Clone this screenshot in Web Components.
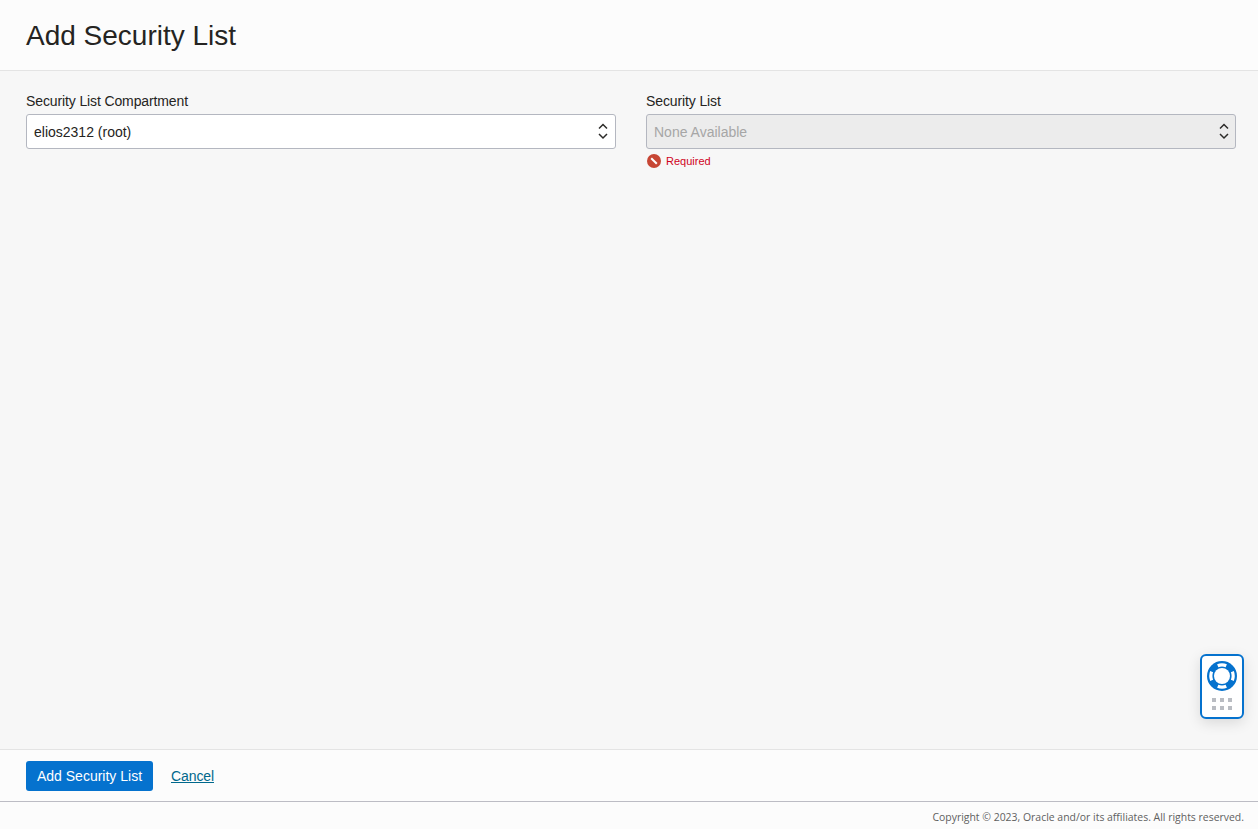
<!DOCTYPE html>
<html lang="en">
<head>
<meta charset="utf-8">
<title>Add Security List</title>
<style>
  html, body { margin: 0; height: 100%; overflow: hidden; }
  body { font-family: "Liberation Sans", Arial, sans-serif; color: #161513; background: #f7f7f7; }
</style>
</head>
<body>
<oci-panel heading="Add Security List">
  <oci-select label="Security List Compartment" value="elios2312 (root)"></oci-select>
  <oci-select label="Security List" value="None Available" disabled error="Required"></oci-select>
  <oci-button slot="actions">Add Security List</oci-button>
  <a slot="actions" href="#" style="color:#00688c;font-size:14px;margin-left:18px;letter-spacing:-0.1px">Cancel</a>
</oci-panel>
<oci-help></oci-help>

<script>
class OciPanel extends HTMLElement {
  connectedCallback() {
    let root = this.attachShadow({ mode: 'open' });
    root.innerHTML = `
    <style>
      :host { display: flex; flex-direction: column; height: 829px; }
      header { height: 68px; flex: none; display: flex; align-items: center; padding: 2px 0 0 26px;
        background: #fcfcfc; border-bottom: 1px solid #e4e4e4; }
      h1 { margin: 0; font-size: 28px; font-weight: 400; line-height: 36px; color: #252422; }
      main { flex: 1; display: grid; grid-template-columns: 590px 590px; column-gap: 30px;
        align-content: start; padding: 22px 0 0 26px; }
      .actions { height: 51px; flex: none; display: flex; align-items: center; padding-left: 26px;
        background: #fcfcfc; border-top: 1px solid #e4e4e4; border-bottom: 1px solid #bcbcc4; }
      footer { height: 25px; flex: none; display: flex; align-items: center; justify-content: flex-end;
        padding: 2px 14px 0 0; background: #fcfcfc; font: 10.45px "Open Sans", sans-serif; color: #5f5f5f; }
    </style>
    <header><h1>${this.getAttribute('heading')}</h1></header>
    <main><slot></slot></main>
    <div class="actions"><slot name="actions"></slot></div>
    <footer>Copyright © 2023, Oracle and/or its affiliates. All rights reserved.</footer>
    `;
  }
}

class OciSelect extends HTMLElement {
  connectedCallback() {
    let root = this.attachShadow({ mode: 'open' });
    let disabled = this.hasAttribute('disabled');
    let error = this.getAttribute('error');
    root.innerHTML = `
    <style>
      :host { display: block; font-size: 14px; }
      label { display: block; line-height: 16px; margin-bottom: 5px; color: #252422; letter-spacing: -0.12px; }
      .box { height: 33px; display: flex; align-items: center; justify-content: space-between;
        padding: 0 7px; border: 1px solid #b4b7c0; border-radius: 3px; background: #fff; color: #252422; }
      .box.off { background: #ececec; color: #a6a6a6; }
      svg.arrows { display: block; margin-right: -1px; }
      .off svg.arrows { margin-right: -2px; }
      .err { display: flex; align-items: center; gap: 5px; margin-top: 5px; padding-left: 1px;
        font-size: 11px; line-height: 14px; color: #d0021b; }
      .err svg { display: block; }
    </style>
    <label>${this.getAttribute('label')}</label>
    <div class="box ${disabled ? 'off' : ''}">
      <span>${this.getAttribute('value')}</span>
      <svg class="arrows" width="12" height="18" viewBox="0 0 12 18" fill="none" stroke="#2c2b29" stroke-width="1.5">
        <path d="M2 5.5 6 1.5 10 5.5"/>
        <path d="M2 11 6 15 10 11"/>
      </svg>
    </div>
    ${error ? `<div class="err">
      <svg width="14" height="14" viewBox="0 0 14 14">
        <circle cx="7" cy="7" r="7" fill="#c74634"/>
        <path d="M4.2 4.2 9.8 9.8" stroke="#fff" stroke-width="2"/>
      </svg><span>${error}</span></div>` : ''}
    `;
  }
}

class OciButton extends HTMLElement {
  connectedCallback() {
    let root = this.attachShadow({ mode: 'open' });
    root.innerHTML = `
    <style>
      :host { display: inline-block; }
      button { height: 30px; width: 127px; padding: 0; border: 0; border-radius: 3px; background: #0572ce;
        color: #fff; font: 14px "Liberation Sans", Arial, sans-serif; cursor: pointer; }
    </style>
    <button><slot></slot></button>
    `;
  }
}

class OciHelp extends HTMLElement {
  connectedCallback() {
    let root = this.attachShadow({ mode: 'open' });
    root.innerHTML = `
    <style>
      :host { position: fixed; left: 1200px; top: 654px; width: 40px; height: 56px; display: flex;
        flex-direction: column; align-items: center; padding-top: 5px;
        background: #fff; border: 2px solid #0572ce; border-radius: 6px;
        box-shadow: 0 4px 14px rgba(0,0,0,.12); }
      .dots { display: grid; grid-template-columns: repeat(3, 4px); gap: 4px; margin-top: 7px; }
      .dots i { width: 4px; height: 4px; background: #b9bcc2; }
    </style>
    <svg width="30" height="30" viewBox="0 0 30 30">
      <circle cx="15" cy="15" r="15" fill="#0572ce"/>
      <circle cx="15" cy="15" r="8" fill="#fff"/>
      <circle cx="15" cy="15" r="11.2" fill="none" stroke="#fff" stroke-width="3.2"
        pathLength="4" stroke-dasharray=".5 .5" stroke-dashoffset=".25"/>
    </svg>
    <div class="dots"><i></i><i></i><i></i><i></i><i></i><i></i></div>
    `;
  }
}

window.customElements.define('oci-panel', OciPanel);
window.customElements.define('oci-select', OciSelect);
window.customElements.define('oci-button', OciButton);
window.customElements.define('oci-help', OciHelp);
</script>
</body>
</html>
